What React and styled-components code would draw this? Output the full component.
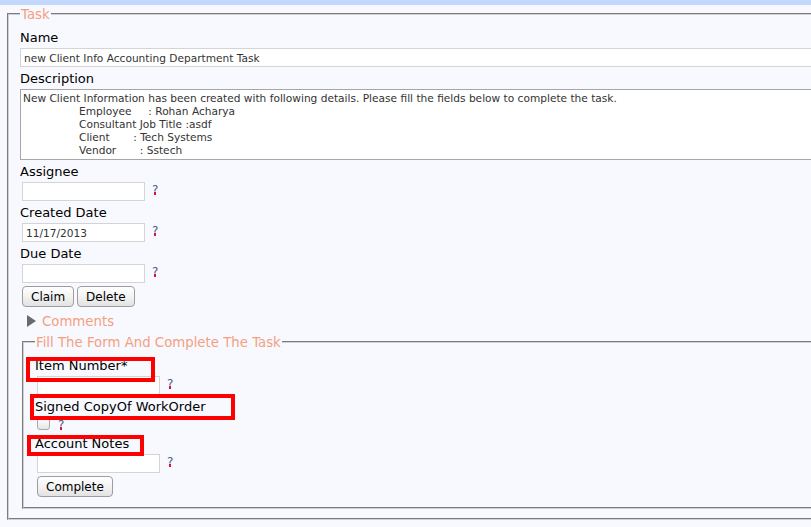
import styled, { createGlobalStyle, css } from 'styled-components';

const GlobalStyle = createGlobalStyle`
  html, body {
    margin: 0;
    padding: 0;
    overflow: hidden;
    background: #f8f9fe;
  }
  body {
    font-family: 'DejaVu Sans', Verdana, sans-serif;
  }
`;

const TopBar = styled.div`
  height: 5px;
  background: #c4d7fc;
`;

const Page = styled.div`
  width: 1040px;
  padding-left: 7px;
`;

const FieldSet = styled.fieldset`
  margin: ${p => (p.$inner ? '2px 0 0 2px' : '0')};
  padding: 6px 11px ${p => (p.$inner ? '10px' : '9px')};
  border: 2px groove #d0d0d0;
  min-width: 0;
`;

const Legend = styled.legend`
  padding: 2px 1px 0;
  font-size: 13.3px;
  line-height: 16px;
  color: #f49f80;
`;

const Label = styled.label`
  position: relative;
  display: block;
  font-size: 13px;
  line-height: 18px;
  margin-bottom: 1px;
  color: #000;

  ${p => p.$mark && css`
    &::after {
      content: '';
      position: absolute;
      left: ${p.$mark[0]}px;
      top: ${p.$mark[1]}px;
      width: ${p.$mark[2]}px;
      height: ${p.$mark[3]}px;
      box-sizing: border-box;
      border: 4px solid #ff0000;
      pointer-events: none;
    }
  `}
`;

const InputRow = styled.div`
  display: flex;
  align-items: flex-start;
  gap: ${p => (p.$check ? '8px' : '7px')};
  height: ${p => (p.$check ? '15px' : 'auto')};
  margin: 0 0 3px ${p => (p.$full ? '0' : '2px')};
`;

const TextInput = styled.input`
  box-sizing: border-box;
  width: ${p => (p.$full ? '100%' : '123px')};
  height: 19px;
  margin: 0;
  padding: 0 3px;
  border: 1px solid #d4d4d4;
  background: #fff;
  font: 10.6px 'DejaVu Sans', Verdana, sans-serif;
  color: #333;
  outline: none;
`;

const TextArea = styled.textarea`
  display: block;
  box-sizing: border-box;
  width: 100%;
  height: 71px;
  margin: 0 0 3px;
  padding: 2px;
  border: 1px solid #a6a6a6;
  background: #fff;
  resize: none;
  overflow: hidden;
  font: 10.6px/13px 'DejaVu Sans', Verdana, sans-serif;
  color: #333;
  tab-size: 28px;
  white-space: pre;
`;

const Check = styled.input.attrs({ type: 'checkbox' })`
  appearance: none;
  margin: 0;
  width: 13px;
  height: 13px;
  border: 1px solid #a8a8a8;
  border-radius: 3px;
  background: linear-gradient(#ffffff, #e6e6e6);
`;

const Help = styled.span`
  position: relative;
  margin-top: 1px;
  font-size: 12px;
  line-height: 14px;
  color: #515c85;

  &::after {
    content: '';
    position: absolute;
    left: 2px;
    top: 9px;
    width: 2px;
    height: 3px;
    background: #d3143f;
  }
`;

const ButtonRow = styled.div`
  display: flex;
  gap: 3px;
  margin: ${p => p.$top}px 0 0 2px;
`;

const Button = styled.button`
  height: 21px;
  padding: 0 8px;
  border: 1px solid #9d9d9d;
  border-radius: 4px;
  background: linear-gradient(#ffffff, #f3f3f3 50%, #e2e2e2);
  font: 12px 'DejaVu Sans', Verdana, sans-serif;
  color: #000;
`;

const Toggle = styled.div`
  display: flex;
  align-items: center;
  gap: 6px;
  height: 20px;
  margin: 4px 0 0 7px;
  font-size: 13.3px;
  color: #f49f80;

  &::before {
    content: '';
    border-left: 9px solid #6a6a6a;
    border-top: 6px solid transparent;
    border-bottom: 6px solid transparent;
  }
`;

const description =
  'New Client Information has been created with following details. Please fill the fields below to complete the task.\n' +
  '\t\tEmployee     : Rohan Acharya\n' +
  '\t\tConsultant Job Title :asdf\n' +
  '\t\tClient       : Tech Systems\n' +
  '\t\tVendor       : Sstech';

function Field({ label, value = '' }) {
  return (
    <div>
      <Label>{label}</Label>
      <InputRow>
        <TextInput defaultValue={value} />
        <Help>?</Help>
      </InputRow>
    </div>
  );
}

export default function App() {
  return (
    <>
      <GlobalStyle />
      <TopBar />
      <Page>
        <FieldSet>
          <Legend>Task</Legend>

          <Label>Name</Label>
          <InputRow $full>
            <TextInput $full defaultValue="new Client Info Accounting Department Task" />
          </InputRow>

          <Label>Description</Label>
          <TextArea readOnly value={description} />

          <Field label="Assignee" />
          <Field label="Created Date" value="11/17/2013" />
          <Field label="Due Date" />

          <ButtonRow $top={1}>
            <Button>Claim</Button>
            <Button>Delete</Button>
          </ButtonRow>

          <Toggle>Comments</Toggle>

          <FieldSet $inner>
            <Legend>Fill The Form And Complete The Task</Legend>

            <Label $mark={[-9, 0, 129, 25]}>Item Number*</Label>
            <InputRow>
              <TextInput />
              <Help>?</Help>
            </InputRow>

            <Label $mark={[-5, -4, 205, 26]}>Signed CopyOf WorkOrder</Label>
            <InputRow $check>
              <Check />
              <Help>?</Help>
            </InputRow>

            <Label $mark={[-8, 0, 117, 21]}>Account Notes</Label>
            <InputRow>
              <TextInput />
              <Help>?</Help>
            </InputRow>

            <ButtonRow $top={3}>
              <Button>Complete</Button>
            </ButtonRow>
          </FieldSet>
        </FieldSet>
      </Page>
    </>
  );
}
